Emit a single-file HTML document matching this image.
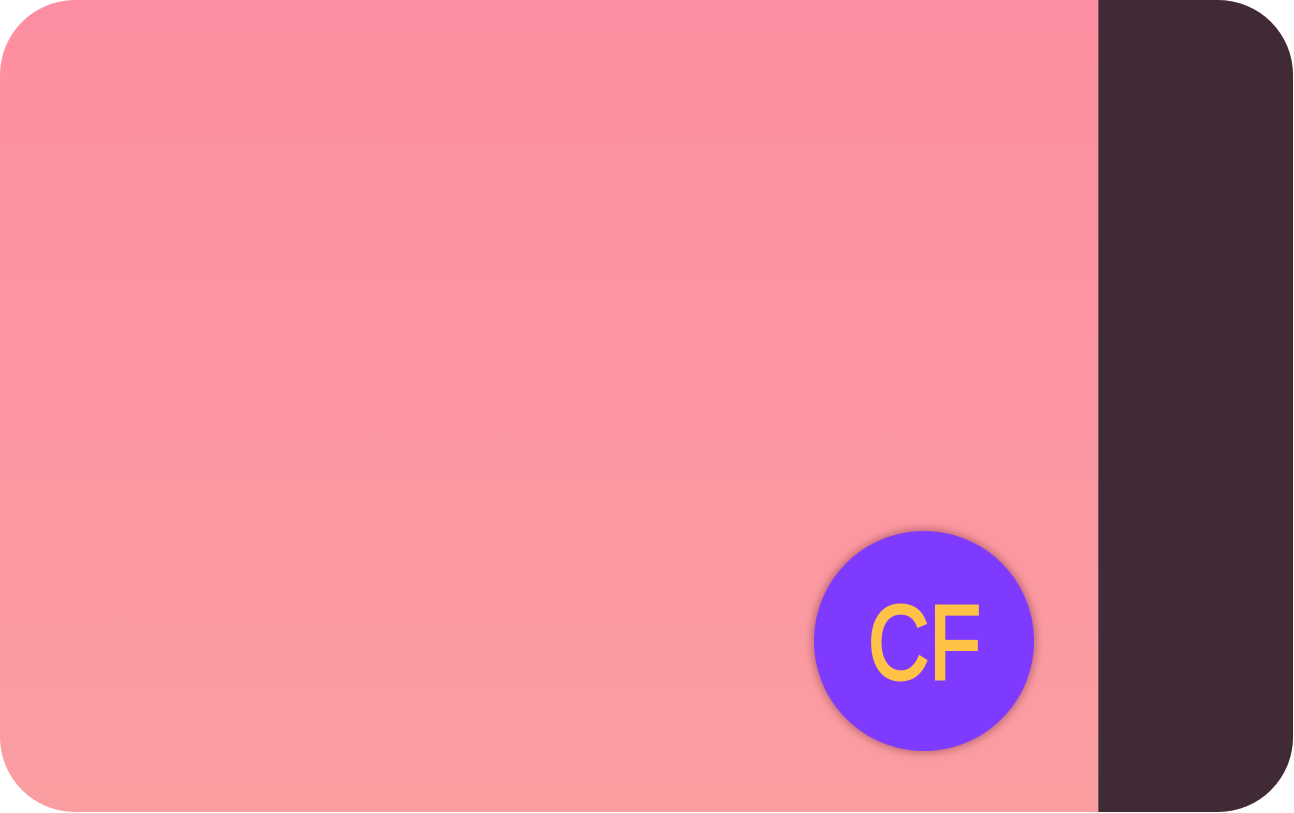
<!DOCTYPE html>
<html><head><meta charset="utf-8"><style>
html,body{margin:0;padding:0;background:#fff;width:1294px;height:813px;overflow:hidden}
.card{position:absolute;left:0;top:0;width:1293px;height:812px;border-radius:75px;overflow:hidden;background:linear-gradient(180deg,#fd8ea1 0%,#fa9ea2 100%)}
.strip{position:absolute;left:1098px;top:0;width:195px;height:812px;background:#3f2a36;border-left:1px solid #6b5a60}
.circle{position:absolute;left:814px;top:531px;width:220px;height:220px;border-radius:50%;background:#7e3bff;box-shadow:0 0 8px 2px rgba(120,40,60,0.45)}
svg{position:absolute;left:0;top:0}
</style></head><body>
<div class="card"><div class="strip"></div></div>
<div class="circle"></div>
<svg width="1294" height="813"><text x="868" y="679" textLength="113" lengthAdjust="spacingAndGlyphs" font-family="Liberation Sans, sans-serif" font-size="106" fill="#ffc146" stroke="#ffc146" stroke-width="3">CF</text></svg>
</body></html>
